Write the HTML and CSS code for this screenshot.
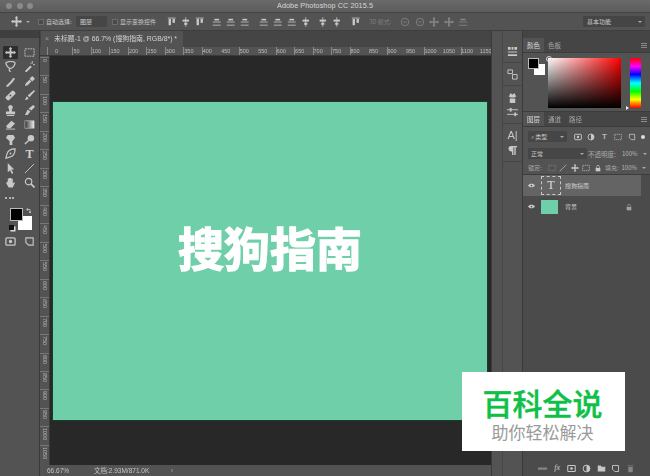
FILE: index.html
```html
<!DOCTYPE html>
<html lang="zh">
<head>
<meta charset="utf-8">
<title>Adobe Photoshop CC 2015.5</title>
<link rel="stylesheet" href="styles.css">
</head>
<body>
<svg class="defs" width="0" height="0">
  <symbol id="move" viewBox="0 0 12 12"><path d="M6 0l2 2H7v3h3V4l2 2-2 2V7H7v3h1l-2 2-2-2h1V7H2v1L0 6l2-2v1h3V2H4z" fill="currentColor"/></symbol>
  <symbol id="marquee" viewBox="0 0 12 12"><rect x="1" y="2" width="10" height="8" fill="none" stroke="currentColor" stroke-dasharray="2 1"/></symbol>
  <symbol id="lasso" viewBox="0 0 12 12"><path d="M1 2c3-2 8-2 10 0 0 3-3 6-5 6S1 5 1 2zM5 8c-1 2 0 3 1 4" fill="none" stroke="currentColor" stroke-width="1.4"/></symbol>
  <symbol id="wand" viewBox="0 0 12 12"><path d="M1 11l6-6 1.500 1.500-6 6z" fill="currentColor"/><path d="M9 0v3M10 4h2M7 2l1 1" stroke="currentColor"/></symbol>
  <symbol id="crop" viewBox="0 0 12 12"><path d="M1 11l5-5 3-4 2 1-3 4-5 5z" fill="currentColor"/></symbol>
  <symbol id="drop" viewBox="0 0 12 12"><path d="M1 11l1-3 4-4 2 2-4 4zM6 3l3-3 3 3-3 3z" fill="currentColor"/></symbol>
  <symbol id="bandage" viewBox="0 0 12 12"><rect x="0" y="3.500" width="12" height="5" rx="1.500" transform="rotate(-45 6 6)" fill="currentColor"/><circle cx="6" cy="6" r="1" fill="#535353"/></symbol>
  <symbol id="brush" viewBox="0 0 12 12"><path d="M11 0l1 1-6 7-2-2zM3 7l2 2c-1 2-3 2-4 2 1-1 1-3 2-4z" fill="currentColor"/></symbol>
  <symbol id="stamp" viewBox="0 0 12 12"><path d="M6 0a2.500 2.500 0 0 1 1.500 4.500V7H11v3H1V7h3.500V4.500A2.500 2.500 0 0 1 6 0zM2 11h8v1H2z" fill="currentColor"/></symbol>
  <symbol id="history" viewBox="0 0 12 12"><path d="M1 11l3-6 3 2-3 4zM5 4l5-4 2 2-4 4z" fill="currentColor"/></symbol>
  <symbol id="eraser" viewBox="0 0 12 12"><path d="M1 8l6-6 4 3-5 5H3z" fill="currentColor"/><path d="M1 11h10" stroke="currentColor"/></symbol>
  <symbol id="gradient" viewBox="0 0 12 12"><defs><linearGradient id="gr"><stop offset="0" stop-color="#333"/><stop offset="1" stop-color="#eee"/></linearGradient></defs><rect x="1" y="2" width="10" height="8" fill="url(#gr)" stroke="#ccc" stroke-width=".6"/></symbol>
  <symbol id="dodge" viewBox="0 0 12 12"><path d="M3 1h6l2 3-3 4v4H5V8L1 4z" fill="currentColor"/></symbol>
  <symbol id="zoomb" viewBox="0 0 12 12"><circle cx="7.500" cy="4.500" r="3.500" fill="currentColor"/><path d="M5 7l-4 4" stroke="currentColor" stroke-width="1.500"/></symbol>
  <symbol id="pen" viewBox="0 0 12 12"><path d="M11 1C7 1 3 3 2 7l-1 4 4-1c4-1 6-5 6-9z" fill="none" stroke="currentColor" stroke-width="1.300"/><circle cx="6" cy="6" r="1" fill="currentColor"/></symbol>
  <symbol id="arrow" viewBox="0 0 12 12"><path d="M3 0l7 7H7l2 4-1.500 1-2-4L3 10z" fill="currentColor"/></symbol>
  <symbol id="line" viewBox="0 0 12 12"><path d="M1 11L11 1" stroke="currentColor"/></symbol>
  <symbol id="hand" viewBox="0 0 12 12"><path d="M3 5V2h1v3-4h1.500v4V1H7v4-3h1.500v5l1-1H11L8.500 11.500H4L1.500 7 1 6h1z" fill="currentColor"/></symbol>
  <symbol id="mag" viewBox="0 0 12 12"><circle cx="5" cy="5" r="3.500" fill="none" stroke="currentColor" stroke-width="1.300"/><path d="M7.500 7.500L11.500 11.500" stroke="currentColor" stroke-width="1.800"/></symbol>
  <symbol id="al1" viewBox="0 0 12 12"><path d="M1 1h10" stroke="currentColor"/><rect x="2" y="2" width="3" height="8" fill="currentColor"/><rect x="7" y="2" width="3" height="5" fill="currentColor"/></symbol>
  <symbol id="al2" viewBox="0 0 12 12"><path d="M6 0v12" stroke="currentColor"/><rect x="2" y="3" width="8" height="2.500" fill="currentColor"/><rect x="4" y="7" width="4" height="2.500" fill="currentColor"/></symbol>
  <symbol id="al3" viewBox="0 0 12 12"><path d="M1 6h10M1 10h10" stroke="currentColor"/><rect x="3" y="2" width="6" height="2" fill="currentColor"/></symbol>
  <symbol id="circ" viewBox="0 0 12 12"><circle cx="6" cy="6" r="4.500" fill="none" stroke="currentColor"/><path d="M4 6h4" stroke="currentColor"/></symbol>
  <symbol id="eye" viewBox="0 0 12 8"><path d="M0 4c3-4 9-4 12 0-3 4-9 4-12 0z" fill="currentColor"/><circle cx="6" cy="4" r="1.500" fill="#4b4b4b"/></symbol>
  <symbol id="lock" viewBox="0 0 12 12"><path d="M4 6V4a2 2 0 0 1 4 0v2" fill="none" stroke="currentColor"/><rect x="2.500" y="6" width="7" height="5" fill="currentColor"/></symbol>
  <symbol id="sq" viewBox="0 0 12 12"><rect x="1" y="2" width="10" height="8" rx="1" fill="none" stroke="currentColor" stroke-width="1.400"/><circle cx="6" cy="6" r="1.800" fill="currentColor"/></symbol>
  <symbol id="half" viewBox="0 0 12 12"><circle cx="6" cy="6" r="4.500" fill="none" stroke="currentColor" stroke-width="1.300"/><path d="M6 1.500a4.500 4.500 0 0 1 0 9z" fill="currentColor"/></symbol>
  <symbol id="folder" viewBox="0 0 12 12"><path d="M1 2h4l1 1.500h5V10H1z" fill="currentColor"/></symbol>
  <symbol id="page" viewBox="0 0 12 12"><path d="M2 2h8v8H5L2 7z" fill="none" stroke="currentColor" stroke-width="1.200"/></symbol>
  <symbol id="trash" viewBox="0 0 12 12"><path d="M2 2h8v1H2zM3 4h6v7H3z" fill="currentColor"/></symbol>
  <symbol id="link" viewBox="0 0 12 12"><path d="M1 6h4M7 6h4" stroke="currentColor" stroke-width="3" stroke-linecap="round"/></symbol>
  <symbol id="sliders" viewBox="0 0 12 12"><path d="M0 3h12M0 8h12" stroke="currentColor"/><rect x="3" y="1" width="2" height="4" fill="currentColor"/><rect x="8" y="6" width="2" height="4" fill="currentColor"/></symbol>
  <symbol id="para" viewBox="0 0 12 12"><path d="M4 1h7v1.500H9.500V11H8V2.500H7V11H5.500V7A3 3 0 0 1 4 1z" fill="currentColor"/></symbol>
  <symbol id="hist" viewBox="0 0 12 12"><path d="M1 1h5v4H1zM6 6h5v5H6z" fill="none" stroke="currentColor"/></symbol>
  <symbol id="swatchb" viewBox="0 0 12 12"><path d="M2 5l2-4 2 2 2-2 2 4-2 1H4zM3 7h6v5H3z" fill="currentColor"/></symbol>
  <symbol id="palette" viewBox="0 0 12 12"><path d="M1 1h3v3H1zM5 1h2v3H5zM8 1h3v3H8zM1 6h10v1H1zM1 9h10v2H1z" fill="currentColor"/></symbol>
  <symbol id="swap" viewBox="0 0 12 12"><path d="M2 3h6v6M1 3l2-2v4zM8 10L6 8h4z" fill="none" stroke="currentColor" stroke-width="1.500"/></symbol>
</svg>

<div class="app">
  <header class="titlebar">
    <div class="lights"><i></i><i></i><i></i></div>
    <div class="apptitle">Adobe Photoshop CC 2015.5</div>
  </header>

  <div class="options">
    <svg class="ic opt-move"><use href="#move"/></svg>
    <span class="caret opt-caret"></span>
    <span class="check"></span><span class="label">自动选择:</span>
    <span class="select">图层</span>
    <span class="check"></span><span class="label label-wide">显示变换控件</span>
    <div class="aligns">
      <svg class="ic"><use href="#al1"/></svg><svg class="ic"><use href="#al2"/></svg><svg class="ic"><use href="#al1"/></svg>
      <svg class="ic g3"><use href="#al3"/></svg><svg class="ic"><use href="#al3"/></svg><svg class="ic"><use href="#al3"/></svg>
      <svg class="ic g5"><use href="#al3"/></svg><svg class="ic"><use href="#al3"/></svg><svg class="ic"><use href="#al3"/></svg>
      <svg class="ic"><use href="#al2"/></svg><svg class="ic g3"><use href="#al2"/></svg><svg class="ic"><use href="#al2"/></svg>
      <svg class="ic g5"><use href="#al1"/></svg>
    </div>
    <span class="mode3d">3D 模式:</span>
    <div class="tools3d">
      <svg class="ic dim"><use href="#circ"/></svg><svg class="ic dim"><use href="#circ"/></svg><svg class="ic dim"><use href="#move"/></svg><svg class="ic dim"><use href="#move"/></svg><svg class="ic dim"><use href="#al3"/></svg>
    </div>
    <span class="workspace-select">基本功能<span class="caret"></span></span>
  </div>

  <div class="workspace">
    <aside class="toolcol">
      <div class="strip"></div>
      <div class="toolgrid">
        <svg class="ic active"><use href="#move"/></svg><svg class="ic"><use href="#marquee"/></svg>
        <svg class="ic"><use href="#lasso"/></svg><svg class="ic"><use href="#wand"/></svg>
        <svg class="ic"><use href="#crop"/></svg><svg class="ic"><use href="#drop"/></svg>
        <svg class="ic"><use href="#bandage"/></svg><svg class="ic"><use href="#brush"/></svg>
        <svg class="ic"><use href="#stamp"/></svg><svg class="ic"><use href="#history"/></svg>
        <svg class="ic"><use href="#eraser"/></svg><svg class="ic"><use href="#gradient"/></svg>
        <svg class="ic"><use href="#dodge"/></svg><svg class="ic"><use href="#zoomb"/></svg>
        <svg class="ic"><use href="#pen"/></svg><span class="tool-t">T</span>
        <svg class="ic"><use href="#arrow"/></svg><svg class="ic"><use href="#line"/></svg>
        <svg class="ic"><use href="#hand"/></svg><svg class="ic"><use href="#mag"/></svg>
      </div>
      <div class="more"><i></i><i></i><i></i></div>
      <div class="swatches tool-swatches">
        <span class="bg"></span><span class="fg"></span>
        <svg class="swap"><use href="#swap"/></svg>
        <span class="mini-default"></span>
      </div>
      <div class="toolbottom">
        <svg class="ic"><use href="#sq"/></svg><svg class="ic"><use href="#page"/></svg>
      </div>
    </aside>

    <main class="doc">
      <div class="tabs"><div class="tab"><span class="close">×</span>未标题-1 @ 66.7% (搜狗指南, RGB/8*) *</div></div>
      <div class="hruler">
        <span>0</span><span>50</span><span>100</span><span>150</span><span>200</span><span>250</span><span>300</span><span>350</span><span>400</span><span>450</span><span>500</span><span>550</span><span>600</span><span>650</span><span>700</span><span>750</span><span>800</span><span>850</span><span>900</span><span>950</span><span>1000</span><span>1050</span><span>1100</span><span>1150</span>
      </div>
      <div class="docbody">
        <div class="vruler">
          <span>0</span><span>50</span><span>100</span><span>150</span><span>200</span><span>250</span><span>300</span><span>350</span><span>400</span><span>450</span><span>500</span><span>550</span><span>600</span><span>650</span><span>700</span><span>750</span><span>800</span><span>850</span><span>900</span><span>950</span><span>1000</span><span>1050</span>
        </div>
        <div class="pasteboard">
          <div class="artboard"><span class="bigtext">搜狗指南</span></div>
        </div>
      </div>
      <footer class="status"><span class="zoomval">66.67%</span><span class="docsize">文档:2.93M/871.0K</span><span class="more-arrow">›</span></footer>
    </main>

    <div class="gutter"></div>

    <div class="iconstrip">
      <div class="stripgroup"><svg class="ic"><use href="#palette"/></svg></div>
      <div class="stripgroup"><svg class="ic"><use href="#hist"/></svg></div>
      <div class="stripgroup tight"><svg class="ic"><use href="#swatchb"/></svg><svg class="ic"><use href="#sliders"/></svg></div>
      <div class="stripgroup tight"><span class="stripa">A|</span><svg class="ic"><use href="#para"/></svg></div>
    </div>

    <aside class="panels">
      <div class="paneltop"></div>
      <div class="paneltabs"><span class="ptab on">颜色</span><span class="ptab">色板</span><span class="menu"></span></div>
      <div class="colorpanel">
        <div class="swatches color-swatches"><span class="bg"></span><span class="fg"></span></div>
        <div class="spectrum"></div>
        <div class="hue"></div>
      </div>
      <div class="paneltabs"><span class="ptab on">图层</span><span class="ptab">通道</span><span class="ptab">路径</span><span class="menu"></span></div>
      <div class="prow filter">
        <span class="field kind">⌕ 类型<span class="caret"></span></span>
        <svg class="ic"><use href="#sq"/></svg><svg class="ic"><use href="#half"/></svg><span class="mini-t">T</span><svg class="ic"><use href="#marquee"/></svg><svg class="ic"><use href="#page"/></svg>
        <span class="toggle"></span>
      </div>
      <div class="prow blend">
        <span class="field normal">正常<span class="caret"></span></span>
        <span class="plabel">不透明度:</span><span class="val">100%</span><span class="caret"></span>
      </div>
      <div class="prow locks">
        <span class="plabel">锁定:</span>
        <svg class="ic dim"><use href="#marquee"/></svg><svg class="ic"><use href="#line"/></svg><svg class="ic"><use href="#move"/></svg><svg class="ic"><use href="#marquee"/></svg><svg class="ic"><use href="#lock"/></svg>
        <span class="plabel fill">填充:</span><span class="val">100%</span><span class="caret"></span>
      </div>
      <div class="layers">
        <div class="layer sel">
          <svg class="eye"><use href="#eye"/></svg>
          <span class="thumb tthumb">T</span>
          <span class="lname">搜狗指南</span>
        </div>
        <div class="layer">
          <svg class="eye"><use href="#eye"/></svg>
          <span class="thumb green"></span>
          <span class="lname">背景</span>
          <svg class="ic lk"><use href="#lock"/></svg>
        </div>
      </div>
      <div class="layerfoot">
        <svg class="ic dim"><use href="#link"/></svg><span class="fx">fx</span><svg class="ic"><use href="#sq"/></svg><svg class="ic"><use href="#half"/></svg><svg class="ic"><use href="#folder"/></svg><svg class="ic"><use href="#page"/></svg><svg class="ic dim"><use href="#trash"/></svg>
      </div>
    </aside>
  </div>

  <div class="watermark">
    <div class="wm-main">百科全说</div>
    <div class="wm-sub">助你轻松解决</div>
  </div>
</div>
</body>
</html>
```

FILE: styles.css
```css
* { box-sizing: border-box; }
html, body { margin: 0; padding: 0; }
body { width: 650px; height: 476px; overflow: hidden; background: #535353; font-family: "Noto Sans CJK SC", "Liberation Sans", sans-serif; color: #cfcfcf; }
.defs { position: absolute; }
.app { position: relative; width: 650px; height: 476px; display: flex; flex-direction: column; filter: blur(.4px); }
.ic { display: block; width: 10px; height: 10px; color: #c8c8c8; flex: none; }
.ic.dim { color: #858585; }
.caret { display: inline-block; width: 0; height: 0; border: 2px solid transparent; border-top: 2.5px solid #aaa; border-bottom: 0; flex: none; }

.titlebar { height: 13px; flex: none; background: linear-gradient(#6a6a6a, #5c5c5c); border-bottom: 1px solid #444; position: relative; display: flex; align-items: center; justify-content: center; }
.lights { position: absolute; left: 6px; top: 3px; display: flex; gap: 4.500px; }
.lights i { width: 6px; height: 6px; border-radius: 50%; background: #8a8a8a; }
.apptitle { font: 7.200px/1 "Liberation Sans", sans-serif; color: #d8d8d8; letter-spacing: .1px; }

.options { height: 18px; flex: none; background: #535353; border-bottom: 1px solid #3e3e3e; display: flex; align-items: center; padding-left: 11px; font-size: 6.500px; }
.opt-move { width: 11px; height: 11px; }
.opt-caret { margin-left: 4px; margin-right: 8px; }
.check { width: 6px; height: 6px; border: 1px solid #6c6c6c; background: #4a4a4a; flex: none; }
.label { margin-left: 2px; white-space: nowrap; width: 29px; flex: none; color: #c8c8c8; font-size: 6px; }
.label-wide { width: 38px; }
.select { width: 31px; height: 11px; line-height: 11px; background: #464646; margin: 0 5px 0 1px; padding-left: 4px; font-size: 6px; border-radius: 1px; flex: none; }
.aligns { display: flex; gap: 4.500px; margin-left: 9px; width: 195px; flex: none; }
.aligns .ic { width: 9.500px; height: 10px; }
.aligns .g3 { margin-left: 3px; }
.aligns .g5 { margin-left: 5px; }
.mode3d { color: #7d7d7d; font-size: 6px; margin-left: 7px; width: 31px; flex: none; white-space: nowrap; }
.tools3d { display: flex; gap: 4.500px; }
.workspace-select { position: absolute; left: 583px; top: 16px; width: 62px; height: 11px; background: #454545; font-size: 6px; line-height: 11px; padding-left: 4px; display: flex; align-items: center; justify-content: space-between; padding-right: 3px; }

.workspace { flex: 1; min-height: 0; display: flex; }

.toolcol { width: 40px; flex: none; background: #535353; border-right: 1px solid #3a3a3a; display: flex; flex-direction: column; }
.strip { height: 7px; background: #3f3f3f; flex: none; }
.toolgrid { display: grid; grid-template-columns: 19px 19px; grid-auto-rows: 14.500px; margin: 7px 0 0 1px; justify-items: center; align-items: center; }
.toolgrid .ic { width: 11px; height: 11px; }
.toolgrid .active { background: #2e2e2e; width: 15px; height: 13px; padding: 1px 2px; border-radius: 1px; }
.tool-t { font: bold 12px/1 "Liberation Serif", serif; color: #d2d2d2; }
.more { height: 8px; margin: 4px 0 0 5px; display: flex; gap: 1.500px; align-items: center; }
.more i { width: 2px; height: 2px; border-radius: 50%; background: #d0d0d0; }
.swatches { position: relative; flex: none; }
.swatches .fg, .swatches .bg { position: absolute; display: block; }
.swatches .fg { background: #000; border: 1px solid #bbb; }
.swatches .bg { background: #fff; }
.tool-swatches { width: 24px; height: 24px; margin: 6px 0 0 10px; }
.tool-swatches .fg { left: 0; top: 0; width: 13px; height: 13px; }
.tool-swatches .bg { left: 8px; top: 8px; width: 14px; height: 14px; }
.swap { position: absolute; left: 16px; top: 0; width: 6px; height: 6px; color: #c8c8c8; }
.mini-default { position: absolute; left: -1px; top: 17px; width: 5px; height: 5px; background: #111; box-shadow: 1.500px 1.500px 0 #ddd; }
.toolbottom { display: flex; gap: 8px; margin: 4px 0 0 5px; }
.toolbottom .ic { width: 11px; height: 11px; }

.doc { width: 451px; flex: none; display: flex; flex-direction: column; }
.tabs { height: 16px; flex: none; background: #454545; padding-left: 1px; }
.tab { width: 142px; height: 16px; background: #535353; font-size: 6.900px; line-height: 16px; white-space: nowrap; color: #d4d4d4; padding-left: 4px; font-family: "Liberation Sans", "Noto Sans CJK SC", sans-serif; }
.close { color: #999; margin-right: 5px; }
.hruler { height: 9px; flex: none; background: #535353 repeating-linear-gradient(90deg, transparent 0, transparent 17.500px, #888 17.500px, #888 18.500px) 15px 0; display: flex; padding-left: 13px; font: 5.500px/9px "Liberation Sans", sans-serif; color: #bdbdbd; border-bottom: 1px solid #3a3a3a; }
.hruler span { width: 18.470px; flex: none; padding-left: 2px; }
.docbody { flex: 1; min-height: 0; display: flex; }
.vruler { width: 10px; flex: none; background: #535353; display: flex; flex-direction: column; padding-top: 1px; overflow: hidden; border-right: 1px solid #3a3a3a; }
.vruler span { height: 18.470px; flex: none; writing-mode: vertical-rl; font: 5.500px/9px "Liberation Sans", sans-serif; color: #b5b5b5; border-top: 1px solid #777; padding-top: 1px; }
.pasteboard { flex: 1; min-width: 0; background: #282828; padding: 46px 4px 45px 3px; display: flex; }
.artboard { flex: 1; background: #6fcfa9; box-shadow: 0 0 0 1px #1c3a30; display: flex; align-items: center; justify-content: center; }
.bigtext { color: #fff; font-size: 46px; line-height: 1; font-weight: 700; -webkit-text-stroke: 1.300px #fff; white-space: nowrap; margin-bottom: 30px; }
.status { height: 11px; flex: none; background: #535353; display: flex; align-items: center; font: 6.500px/11px "Liberation Sans", "Noto Sans CJK SC", sans-serif; color: #c4c4c4; padding-left: 7px; }
.zoomval { width: 47px; }
.docsize { width: 77px; }
.more-arrow { color: #aaa; }

.gutter { width: 11px; flex: none; background: #535353; border-left: 1px solid #3a3a3a; }
.iconstrip { width: 21px; flex: none; background: #535353; padding-top: 9px; display: flex; flex-direction: column; border-left: 1px solid #464646; border-right: 1px solid #3a3a3a; }
.stripgroup { display: flex; flex-direction: column; align-items: center; justify-content: center; gap: 4px; height: 23px; border-bottom: 1px solid #464646; }
.stripgroup.tight { height: 38px; }
.stripgroup .ic { width: 11px; height: 11px; }
.stripa { font: 11px/11px "Liberation Sans", sans-serif; color: #c8c8c8; }

.panels { flex: 1; min-width: 0; background: #535353; display: flex; flex-direction: column; }
.paneltop { height: 7px; flex: none; background: #454545; }
.paneltabs { height: 15px; flex: none; background: #454545; display: flex; font-size: 6.500px; line-height: 15px; color: #a8a8a8; position: relative; border-bottom: 1px solid #3c3c3c; }
.ptab { width: 21px; text-align: center; }
.ptab.on { background: #535353; color: #dcdcdc; }
.menu { position: absolute; right: 3px; top: 5px; width: 6px; height: 5px; border-top: 1px solid #8a8a8a; border-bottom: 1px solid #8a8a8a; background: linear-gradient(transparent 40%, #8a8a8a 40%, #8a8a8a 60%, transparent 60%); }
.colorpanel { height: 59px; flex: none; position: relative; border-bottom: 1px solid #3c3c3c; }
.color-swatches { position: absolute; left: 5px; top: 5px; width: 18px; height: 18px; }
.color-swatches .fg { left: 0; top: 0; width: 11px; height: 11px; }
.color-swatches .bg { left: 6px; top: 6px; width: 11px; height: 11px; }
.spectrum { position: absolute; left: 25px; top: 5px; width: 73px; height: 50px; background: linear-gradient(transparent, #000), linear-gradient(90deg, #fff, #f00); }
.spectrum::before { content: ""; position: absolute; left: -2px; top: -2px; width: 4px; height: 4px; border: 1px solid #ddd; border-radius: 50%; }
.hue { position: absolute; left: 107px; top: 5px; width: 11px; height: 50px; background: linear-gradient(#f00, #f0f 17%, #00f 33%, #0ff 50%, #0f0 67%, #ff0 83%, #f00); }
.hue::before { content: ""; position: absolute; left: -4px; bottom: -2px; border: 2px solid transparent; border-left: 3px solid #eee; border-right: 0; }

.prow { height: 15px; flex: none; display: flex; align-items: center; font-size: 6px; padding-left: 5px; color: #b8b8b8; }
.filter { height: 19px; gap: 5.500px; }
.filter .ic { width: 8px; height: 8px; }
.filter .kind { margin-right: 1px; }
.mini-t { font: bold 8px/8px "Liberation Sans", sans-serif; width: 8px; text-align: center; }
.field { background: #464646; height: 11px; line-height: 11px; display: flex; align-items: center; justify-content: space-between; padding: 0 3px; color: #c8c8c8; flex: none; }
.kind { width: 39px; }
.normal { width: 59px; }
.toggle { width: 4px; height: 4px; border-radius: 50%; background: #ddd; }
.plabel { white-space: nowrap; color: #a9a9a9; }
.blend .plabel { margin-left: 1px; width: 33px; font-size: 6.500px; }
.val { width: 17px; margin-left: 1px; font-size: 6px; }
.blend .caret { margin-left: 4px; }
.locks { gap: 3.500px; border-bottom: 1px solid #3c3c3c; height: 14px; }
.locks .ic { width: 8px; height: 8px; }
.locks .plabel { width: 14px; font-size: 6px; }
.locks .ic:first-of-type { margin-left: 2px; }
.fill { margin-left: 0; }
.locks .val { margin-left: -1px; }
.layers { flex: 1; min-height: 0; background: #4b4b4b; }
.layer { height: 21px; display: flex; align-items: center; padding-left: 5px; font-size: 6px; }
.layer.sel { background: #646464; margin-right: 9px; }
.eye { width: 7px; height: 5px; color: #d0d0d0; flex: none; }
.thumb { width: 17px; height: 14px; margin-left: 6px; flex: none; display: block; }
.tthumb { width: 20px; height: 19px; border: 1px dashed #c8c8c8; font: 12px/17px "Liberation Serif", serif; text-align: center; color: #e0e0e0; }
.green { background: #6fcfa9; }
.lname { margin-left: 4px; color: #cfcfcf; width: 60px; white-space: nowrap; }
.layer:last-child .lname { margin-left: 7px; }
.lk { margin-left: 0; width: 8px; height: 8px; color: #a0a0a0; }
.layerfoot { height: 16px; flex: none; background: #4b4b4b; display: flex; gap: 5.700px; justify-content: flex-end; align-items: center; padding-right: 15px; font: italic 8px/1 "Liberation Serif", serif; }
.layerfoot .ic { width: 9px; height: 9px; }
.fx { width: 9px; text-align: center; }

.watermark { position: absolute; left: 462px; top: 372px; width: 163px; height: 79px; background: #fff; display: flex; flex-direction: column; align-items: center; padding-top: 12px; padding-right: 2px; }
.wm-main { color: #0fc048; font-size: 30px; line-height: 36px; height: 38px; font-weight: 500; -webkit-text-stroke: .4px #0fc048; white-space: nowrap; }
.wm-sub { color: #9a9a9a; font-size: 17px; line-height: 20px; white-space: nowrap; }
```
